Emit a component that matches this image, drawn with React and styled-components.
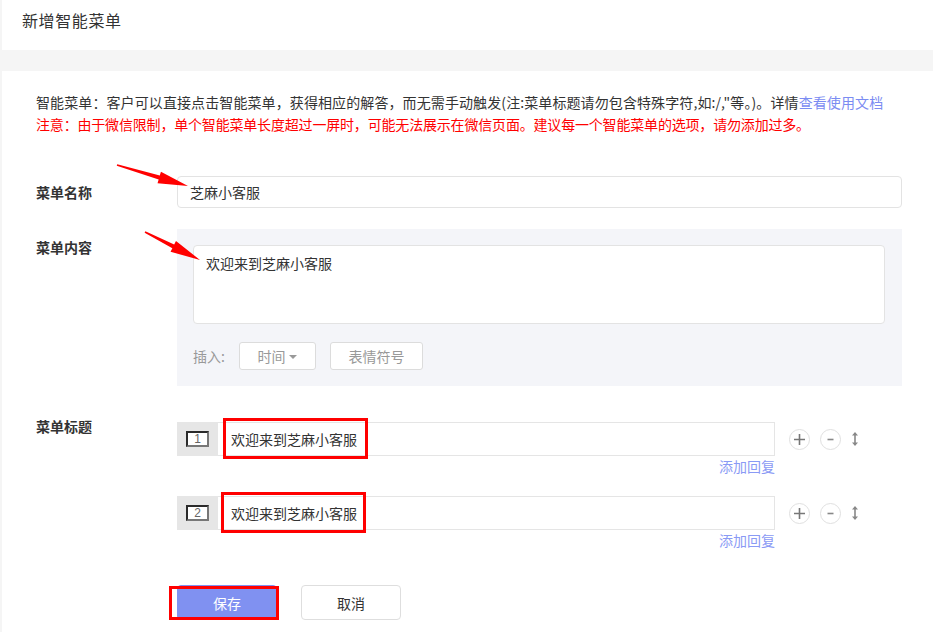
import React from "react"
import styled, { createGlobalStyle } from "styled-components"

const GlobalStyle = createGlobalStyle`
  html, body {
    margin: 0;
    padding: 0;
    background: #f5f5f5;
  }
  body {
    font-family: "Noto Sans CJK SC", "Liberation Sans", sans-serif;
    font-size: 14px;
    color: #333;
  }
`

const Page = styled.div`
  position: relative;
  width: 933px;
  height: 632px;
  overflow: hidden;
  box-sizing: border-box;
  padding-left: 2px;
  display: flex;
  flex-direction: column;
  gap: 21px;
`

const Header = styled.div`
  height: 50px;
  box-sizing: border-box;
  background: #fff;
  padding: 10px 0 0 20px;
  font-size: 16px;
  line-height: 20px;
  letter-spacing: 0.6px;
  color: #333;
`

const Card = styled.div`
  flex: 1;
  background: #fff;
  padding: 20px 31px 0 34px;
`

const Intro = styled.div`
  font-size: 14px;
  line-height: 22px;
  letter-spacing: ${p => p.$spacing || "0"};
  color: ${p => (p.$warn ? "#ff0000" : "#333")};
  white-space: nowrap;
`

const Link = styled.a`
  color: #7b8cf2;
  text-decoration: none;
`

const FormRow = styled.div`
  display: grid;
  grid-template-columns: 141px 1fr;
  align-items: ${p => p.$align || "start"};
  margin-top: ${p => p.$top || "0"};
`

const Label = styled.div`
  font-size: 14px;
  font-weight: bold;
  line-height: 20px;
  color: #333;
  margin-top: ${p => p.$offset || "0"};
`

const TextBox = styled.div`
  height: 32px;
  box-sizing: border-box;
  border: 1px solid #e3e3e3;
  border-radius: 4px;
  padding: 0 12px;
  display: flex;
  align-items: center;
  line-height: 20px;
`

const Panel = styled.div`
  height: 157px;
  box-sizing: border-box;
  background: #f4f5f9;
  padding: 16px 17px 16px 16px;
`

const TextArea = styled.div`
  height: 79px;
  box-sizing: border-box;
  background: #fff;
  border: 1px solid #e3e3e3;
  border-radius: 4px;
  padding: 7px 12px;
  line-height: 20px;
`

const InsertRow = styled.div`
  margin-top: 18px;
  display: flex;
  align-items: center;
  gap: 14px;
`

const InsertLabel = styled.span`
  color: #999;
  font-size: 14px;
  white-space: nowrap;
`

const ToolButton = styled.div`
  width: ${p => p.$w};
  height: 28px;
  box-sizing: border-box;
  border: 1px solid #dcdcdc;
  border-radius: 3px;
  background: #fff;
  color: #999;
  font-size: 14px;
  display: flex;
  align-items: center;
  justify-content: center;
  gap: 4px;
  flex-shrink: 0;
`

const Caret = styled.span`
  width: 0;
  height: 0;
  border-left: 4px solid transparent;
  border-right: 4px solid transparent;
  border-top: 4px solid #999;
  margin-top: 2px;
`

const TitleList = styled.div`
  display: flex;
  flex-direction: column;
`

const TitleItem = styled.div`
  display: flex;
  flex-direction: column;
  margin-bottom: 20px;
`

const TitleLine = styled.div`
  display: flex;
  align-items: center;
`

const NumberCell = styled.div`
  width: 41px;
  height: 34px;
  flex-shrink: 0;
  background: #e6e6e6;
  display: flex;
  align-items: center;
  justify-content: center;
`

const NumberBox = styled.div`
  width: 23px;
  height: 16px;
  box-sizing: border-box;
  background: #fff;
  border: 2px solid;
  border-color: #2a2a2a #777 #777 #2a2a2a;
  font-family: "Liberation Sans", sans-serif;
  font-size: 12px;
  line-height: 12px;
  color: #666;
  text-align: center;
`

const TitleInput = styled.div`
  position: relative;
  width: 557px;
  height: 34px;
  flex-shrink: 0;
  box-sizing: border-box;
  border: 1px solid #e5e5e5;
  border-left: none;
  display: flex;
  align-items: center;
  padding-left: 13px;
  line-height: 20px;
`

const Highlight = styled.div`
  position: absolute;
  left: ${p => p.$left || "5px"};
  top: -5px;
  width: 145px;
  height: 41px;
  box-sizing: border-box;
  border: 3px solid #ff0000;
`

const AddReply = styled.div`
  width: 598px;
  text-align: right;
  color: #8a9af5;
  font-size: 14px;
  line-height: 20px;
`

const Actions = styled.div`
  display: flex;
  align-items: center;
  margin-left: 14px;
  gap: 10px;
`

const Circle = styled.div`
  width: 21px;
  height: 21px;
  box-sizing: border-box;
  border: 1px solid #e0e0e0;
  border-radius: 50%;
  display: flex;
  align-items: center;
  justify-content: center;
  background: #fff;
`

const ButtonRow = styled.div`
  display: flex;
  gap: 24px;
  margin-top: 15px;
`

const SaveWrap = styled.div`
  position: relative;
`

const Button = styled.div`
  width: 100px;
  height: 35px;
  box-sizing: border-box;
  border-radius: 4px;
  border: 1px solid ${p => (p.$primary ? "#8091f1" : "#dedede")};
  background: ${p => (p.$primary ? "#8091f1" : "#fff")};
  color: ${p => (p.$primary ? "#fff" : "#333")};
  font-size: 14px;
  display: flex;
  align-items: center;
  justify-content: center;
`

const SaveHighlight = styled.div`
  position: absolute;
  left: -8px;
  top: 1px;
  width: 110px;
  height: 34px;
  box-sizing: border-box;
  border: 3px solid #ff0000;
  pointer-events: none;
`

const Overlay = styled.svg`
  position: absolute;
  left: 0;
  top: 0;
  pointer-events: none;
`

const arrowPoints = (tx, ty, hx, hy) => {
  const dx = hx - tx
  const dy = hy - ty
  const len = Math.hypot(dx, dy)
  const ux = dx / len
  const uy = dy / len
  const nx = -uy
  const ny = ux
  const headLen = 30
  const bx = hx - ux * headLen
  const by = hy - uy * headLen
  const pts = [
    [tx + nx * 0.8, ty + ny * 0.8],
    [bx + nx * 2, by + ny * 2],
    [bx + nx * 6, by + ny * 6],
    [hx, hy],
    [bx - nx * 6, by - ny * 6],
    [bx - nx * 2, by - ny * 2],
    [tx - nx * 0.8, ty - ny * 0.8],
  ]
  return pts.map(p => p.join(",")).join(" ")
}

const Plus = () => (
  <svg width="13" height="13" viewBox="0 0 13 13">
    <path d="M6.5 1v11M1 6.5h11" stroke="#777" strokeWidth="1.6" />
  </svg>
)

const Minus = () => (
  <svg width="9" height="9" viewBox="0 0 9 9">
    <path d="M1.5 4.5h6" stroke="#888" strokeWidth="1.6" />
  </svg>
)

const UpDown = () => (
  <svg width="8" height="16" viewBox="0 0 8 16">
    <path d="M4 2v12" stroke="#888" strokeWidth="1.6" />
    <path d="M1 4.5L4 1l3 3.5zM1 11.5L4 15l3-3.5z" fill="#888" />
  </svg>
)

const titles = [
  { n: 1, text: "欢迎来到芝麻小客服", hl: "5px" },
  { n: 2, text: "欢迎来到芝麻小客服", hl: "3px" },
]

export default function App() {
  return (
    <Page>
      <GlobalStyle />
      <Header>新增智能菜单</Header>
      <Card>
        <Intro $spacing="0.1px">
          智能菜单：客户可以直接点击智能菜单，获得相应的解答，而无需手动触发(注:菜单标题请勿包含特殊字符,如:/,"等。)。详情
          <Link href="#">查看使用文档</Link>
        </Intro>
        <Intro $warn $spacing="-0.18px">
          注意：由于微信限制，单个智能菜单长度超过一屏时，可能无法展示在微信页面。建议每一个智能菜单的选项，请勿添加过多。
        </Intro>

        <FormRow $top="41px" $align="center">
          <Label>菜单名称</Label>
          <TextBox>芝麻小客服</TextBox>
        </FormRow>

        <FormRow $top="21px">
          <Label $offset="8px">菜单内容</Label>
          <Panel>
            <TextArea>欢迎来到芝麻小客服</TextArea>
            <InsertRow>
              <InsertLabel>插入:</InsertLabel>
              <ToolButton $w="77px">
                时间 <Caret />
              </ToolButton>
              <ToolButton $w="93px">表情符号</ToolButton>
            </InsertRow>
          </Panel>
        </FormRow>

        <FormRow $top="36px">
          <Label $offset="-6px">菜单标题</Label>
          <TitleList>
            {titles.map(t => (
              <TitleItem key={t.n}>
                <TitleLine>
                  <NumberCell>
                    <NumberBox>{t.n}</NumberBox>
                  </NumberCell>
                  <TitleInput>
                    {t.text}
                    <Highlight $left={t.hl} />
                  </TitleInput>
                  <Actions>
                    <Circle>
                      <Plus />
                    </Circle>
                    <Circle>
                      <Minus />
                    </Circle>
                    <UpDown />
                  </Actions>
                </TitleLine>
                <AddReply>添加回复</AddReply>
              </TitleItem>
            ))}
          </TitleList>
        </FormRow>

        <FormRow>
          <div />
          <ButtonRow>
            <SaveWrap>
              <Button $primary>保存</Button>
              <SaveHighlight />
            </SaveWrap>
            <Button>取消</Button>
          </ButtonRow>
        </FormRow>
      </Card>

      <Overlay width="933" height="632">
        <polygon points={arrowPoints(117, 165, 188, 186)} fill="#ff0000" />
        <polygon points={arrowPoints(145, 232, 200, 260)} fill="#ff0000" />
      </Overlay>
    </Page>
  )
}
